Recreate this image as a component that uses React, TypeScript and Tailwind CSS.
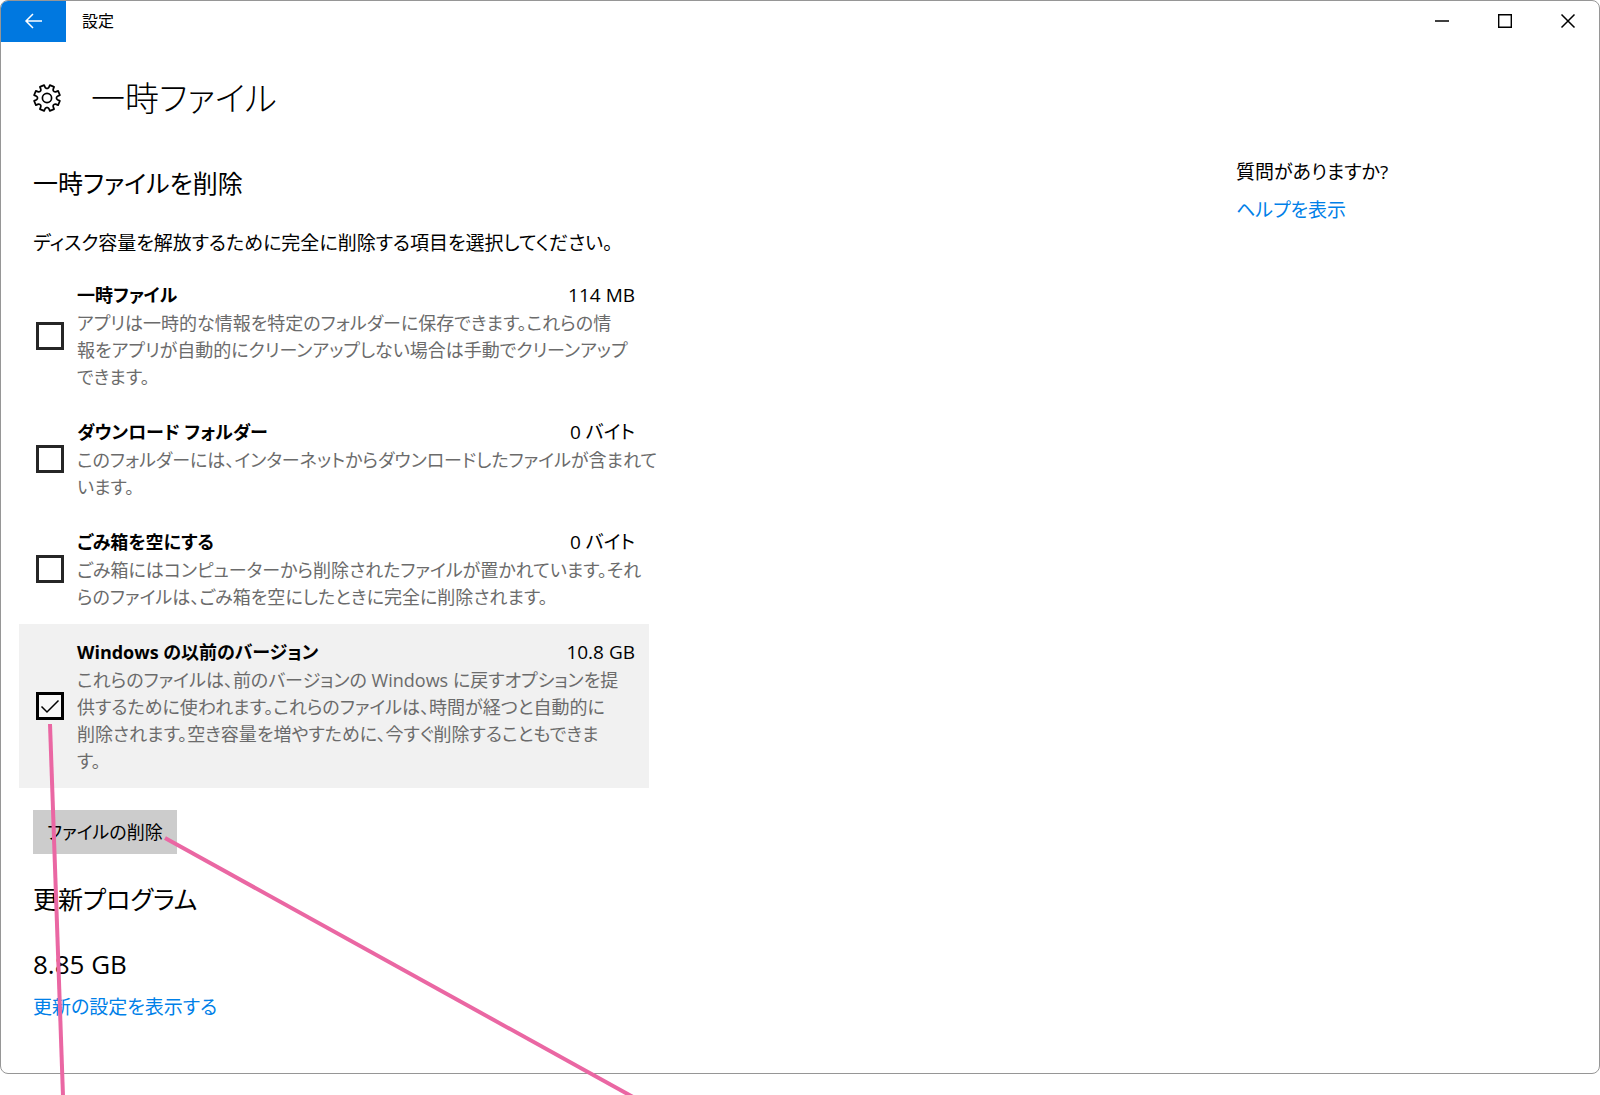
import React, { useState } from 'react';

interface CleanupItem {
  id: string;
  name: string;
  size: string;
  lines: string[];
}

const items: CleanupItem[] = [
  {
    id: 'temp',
    name: '一時ファイル',
    size: '114 MB',
    lines: [
      'アプリは一時的な情報を特定のフォルダーに保存できます。これらの情',
      '報をアプリが自動的にクリーンアップしない場合は手動でクリーンアップ',
      'できます。'
    ]
  },
  {
    id: 'downloads',
    name: 'ダウンロード フォルダー',
    size: '0 バイト',
    lines: [
      'このフォルダーには、インターネットからダウンロードしたファイルが含まれて',
      'います。'
    ]
  },
  {
    id: 'trash',
    name: 'ごみ箱を空にする',
    size: '0 バイト',
    lines: [
      'ごみ箱にはコンピューターから削除されたファイルが置かれています。それ',
      'らのファイルは、ごみ箱を空にしたときに完全に削除されます。'
    ]
  },
  {
    id: 'windows-old',
    name: 'Windows の以前のバージョン',
    size: '10.8 GB',
    lines: [
      'これらのファイルは、前のバージョンの Windows に戻すオプションを提',
      '供するために使われます。これらのファイルは、時間が経つと自動的に',
      '削除されます。空き容量を増やすために、今すぐ削除することもできま',
      'す。'
    ]
  }
];

const GearIcon = () => {
  // eight teeth with a rounded valley between each pair
  const points: string[] = [];
  for (let i = 0; i < 8; i++) {
    const steps = [
      [-18, 9.6],
      [-13, 10.6],
      [-10, 13.2],
      [10, 13.2],
      [13, 10.6],
      [18, 9.6]
    ];
    steps.forEach(([deg, r]) => {
      const a = ((i * 45 + 22.5 + deg) * Math.PI) / 180;
      points.push(`${(14 + r * Math.cos(a)).toFixed(2)},${(14 + r * Math.sin(a)).toFixed(2)}`);
    });
  }

  return (
    <svg className="w-7 h-7" viewBox="0 0 28 28" fill="none" stroke="#000" strokeWidth="1.7" strokeLinejoin="round">
      <polygon points={points.join(' ')} />
      <circle cx="14" cy="14" r="4.6" />
    </svg>
  );
};

const TitleBar = () => (
  <header className="flex h-[41px] items-stretch">
    <button aria-label="戻る" className="flex w-[65px] items-center justify-center bg-[#0078e0] pb-0.5">
      <svg className="w-5 h-5" viewBox="0 0 20 20" fill="none" stroke="#fff" strokeWidth="1.5">
        <path d="M18 10H2M9 3L2 10l7 7" />
      </svg>
    </button>
    <span className="flex flex-1 items-center pb-0.5 pl-4 text-base">設定</span>
    <button aria-label="最小化" className="flex w-[63px] items-center justify-center pb-0.5">
      <svg className="w-4 h-4" viewBox="0 0 16 16" stroke="#000" strokeWidth="1.4">
        <path d="M1 8h14" />
      </svg>
    </button>
    <button aria-label="最大化" className="flex w-[63px] items-center justify-center pb-0.5">
      <svg className="w-4 h-4" viewBox="0 0 16 16" fill="none" stroke="#000" strokeWidth="1.4">
        <path d="M1.7 1.7h12.6v12.6H1.7z" />
      </svg>
    </button>
    <button aria-label="閉じる" className="flex w-[63px] items-center justify-center pb-0.5">
      <svg className="w-4 h-4" viewBox="0 0 16 16" stroke="#000" strokeWidth="1.5">
        <path d="M1.5 1.5l13 13M14.5 1.5l-13 13" />
      </svg>
    </button>
  </header>
);

interface CleanupRowProps {
  item: CleanupItem;
  checked: boolean;
  onToggle: () => void;
}

const CleanupRow: React.FC<CleanupRowProps> = ({ item, checked, onToggle }) => (
  <label
    htmlFor={item.id}
    className={`flex items-center gap-[13px] py-[13px] pl-[17px] pr-[14px] ${checked ? 'bg-[#f1f1f1]' : ''}`}
  >
    <span className="relative flex shrink-0">
      <input
        id={item.id}
        type="checkbox"
        checked={checked}
        onChange={onToggle}
        className="h-7 w-7 appearance-none border-[3px] border-[#262626] bg-white checked:border-black checked:bg-[#f8f8f8]"
      />
      {checked && (
        <svg
          className="pointer-events-none absolute inset-0 h-7 w-7"
          viewBox="0 0 28 28"
          fill="none"
          stroke="#000"
          strokeWidth="1.5"
        >
          <path d="M5.5 14.5l5.5 5.5L22.5 8.5" />
        </svg>
      )}
    </span>
    <span className="min-w-0 flex-1">
      <span className="flex justify-between leading-[30px]">
        <span className="text-lg leading-[30px] font-bold">{item.name}</span>
        <span>{item.size}</span>
      </span>
      <span className="block whitespace-nowrap text-lg leading-[27px] text-[#6b6b6b]">
        {item.lines.map((line) => (
          <span key={line} className="block">
            {line}
          </span>
        ))}
      </span>
    </span>
  </label>
);

const App: React.FC = () => {
  const [selected, setSelected] = useState<string[]>(['windows-old']);

  const toggle = (id: string) => {
    setSelected((prev) => (prev.includes(id) ? prev.filter((s) => s !== id) : [...prev, id]));
  };

  return (
    <div
      lang="ja"
      className="relative min-h-screen overflow-hidden bg-white pb-[21px] font-['Open_Sans','Noto_Sans_CJK_JP',sans-serif] text-[19px] text-black [font-feature-settings:'palt']"
    >
      <div className="overflow-hidden rounded-lg border border-[#969696] bg-white">
        <TitleBar />

        <div className="flex items-center gap-[30px] px-8 pt-[26px]">
          <GearIcon />
          <h1 className="text-[34px] font-light leading-[60px]">一時ファイル</h1>
        </div>

        <div className="flex pb-[48px] pt-[25px]">
          <main className="min-w-0 flex-1 pt-[5px]">
            <section className="w-[648px] pl-[18px]">
              <div className="pl-[14px]">
                <h2 className="text-[25px] leading-[50px]">一時ファイルを削除</h2>
                <p className="whitespace-nowrap pb-[6px] pt-[18px] leading-[35px]">
                  ディスク容量を解放するために完全に削除する項目を選択してください。
                </p>
              </div>

              {items.map((item) => (
                <CleanupRow
                  key={item.id}
                  item={item}
                  checked={selected.includes(item.id)}
                  onToggle={() => toggle(item.id)}
                />
              ))}
            </section>

            <section className="px-8 pt-[22px]">
              <button className="h-11 bg-[#cccccc] px-[14px] text-lg">ファイルの削除</button>
              <h2 className="pt-5 text-[25px] leading-[50px]">更新プログラム</h2>
              <p className="pt-5 text-[26px] leading-[40px]">8.85 GB</p>
              <a href="#update" className="block w-fit pt-[5px] leading-[36px] text-[#0080e8]">
                更新の設定を表示する
              </a>
            </section>
          </main>

          <aside className="w-[363px] leading-[38px]">
            <p>質問がありますか?</p>
            <a href="#help" className="text-[#0080e8]">
              ヘルプを表示
            </a>
          </aside>
        </div>
      </div>

      {/* callout lines from the ticked box and the delete button */}
      <svg
        className="pointer-events-none absolute left-0 top-0 h-[1095px] w-[1600px]"
        viewBox="0 0 1600 1095"
        stroke="#ea67a3"
        strokeWidth="4"
      >
        <path d="M50 724L63 1096" />
        <path d="M165 838L633 1097" />
      </svg>
    </div>
  );
};

export default App;
